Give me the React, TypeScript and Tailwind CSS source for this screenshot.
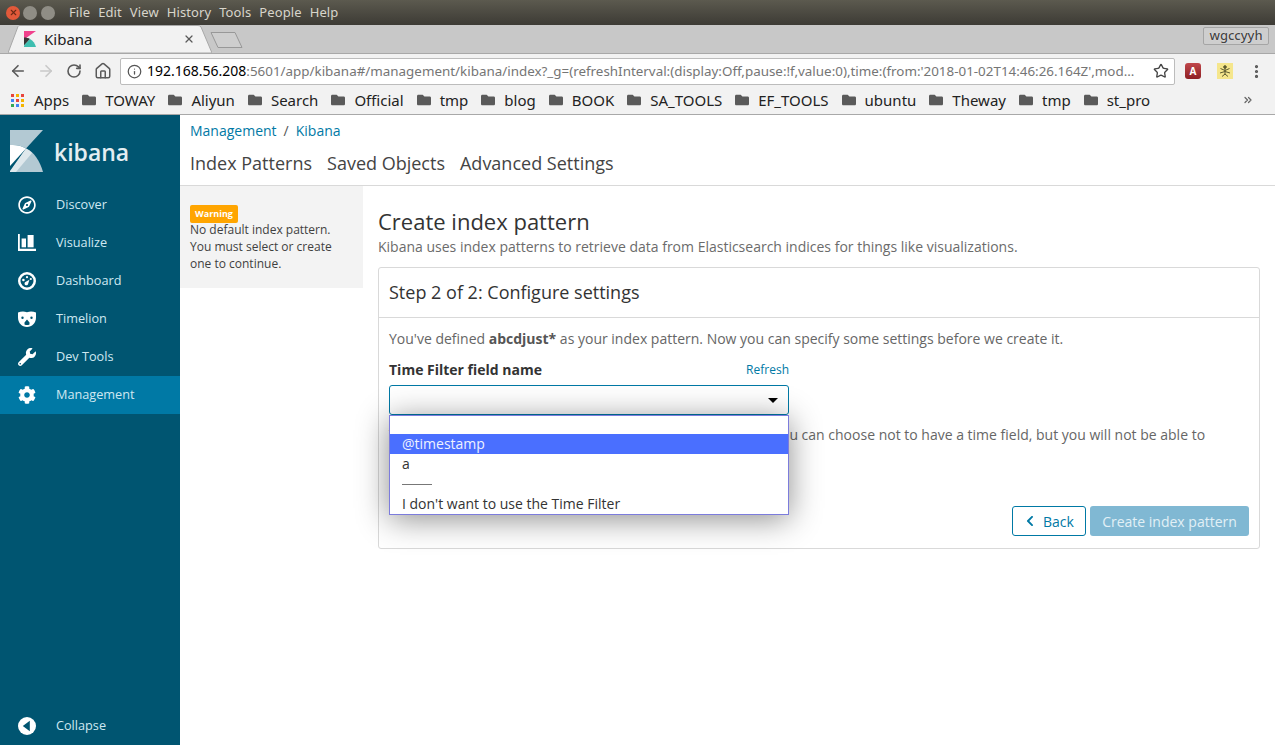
import { ArrowLeft, ArrowRight, EllipsisVertical, Home, Info, RotateCw, Star, X, ChevronsRight } from "lucide-react";
import { FaChevronLeft, FaCog, FaFolder, FaRegCompass, FaWrench } from "react-icons/fa";

const menus = ["File", "Edit", "View", "History", "Tools", "People", "Help"];
const bookmarks = ["TOWAY", "Aliyun", "Search", "Official", "tmp", "blog", "BOOK", "SA_TOOLS", "EF_TOOLS", "ubuntu", "Theway", "tmp", "st_pro"];
const appColors = ["#e8453c", "#f4b400", "#e8453c", "#4285f4", "#e8453c", "#f4b400", "#34a853", "#4285f4", "#f4b400"];

function VisualizeIcon() {
  return (
    <svg width="18" height="18" viewBox="0 0 18 18" fill="#fff">
      <path d="M0 0h1.800v14.800H18V17H0z" />
      <rect x="3.600" y="4.500" width="4.400" height="8.800" />
      <rect x="9.600" y="1" width="6" height="12.300" />
    </svg>
  );
}

function DashboardIcon() {
  return (
    <svg width="18" height="18" viewBox="0 0 18 18" fill="#fff">
      <path fillRule="evenodd" d="M9 0a9 9 0 1 1 0 18A9 9 0 0 1 9 0zm0 2.500a6.500 6.500 0 1 0 0 13 6.500 6.500 0 0 0 0-13z" />
      <circle cx="5.400" cy="8" r="1.300" />
      <circle cx="9" cy="5.200" r="1.100" />
      <circle cx="12.800" cy="7" r="1.100" />
      <path d="M7.400 10l4-2.200-1.400 4.400a1.800 1.800 0 1 1-2.600-2.200z" />
    </svg>
  );
}

function TimelionIcon() {
  return (
    <svg width="18" height="16" viewBox="0 0 18 16" fill="#fff">
      <path fillRule="evenodd" d="M0 1.500C3 .2 6 0 9 1.200 12 0 15 .2 18 1.500v5C18 12 14 16 9 16S0 12 0 6.500zM4.500 5.500a1.200 1.200 0 1 0 0 2.400 1.200 1.200 0 0 0 0-2.400zm9 0a1.200 1.200 0 1 0 0 2.400 1.200 1.200 0 0 0 0-2.400zM6.500 11.500L9 8.500l2.500 3v2a6 6 0 0 1-5 0z" />
    </svg>
  );
}

function CollapseIcon() {
  return (
    <svg width="18" height="18" viewBox="0 0 18 18">
      <circle cx="9" cy="9" r="9" fill="#fff" />
      <path d="M11.800 3.800v10.400L4.800 9z" fill="#005571" />
    </svg>
  );
}

function KibanaLogo() {
  return (
    <svg width="33" height="42" viewBox="0 0 33 42">
      <path d="M0 0h33L16 18.500C11 15.500 6 14.500 0 15z" fill="#b3c9d3" />
      <path d="M16 18.500C24 22 30 31 33 42H0z" fill="#b3c9d3" />
      <path d="M0 15c6-.5 11 .5 16 3.500L0 36z" fill="#fff" />
      <path d="M0 41L16 18.500c2.500 1 4.500 2.800 6 4.500L6 42H0z" fill="#dfe8ec" />
    </svg>
  );
}

function Favicon() {
  return (
    <svg width="12" height="16" viewBox="0 0 12 16">
      <path d="M0 0h12L0 8.500z" fill="#f0418c" />
      <path d="M0 6.500C2.500 6.500 4.500 7 6 8L0 14.500z" fill="#353535" />
      <path d="M0 16V14.500L6 8C9 9.500 11 12.500 12 16z" fill="#3ebeb0" />
    </svg>
  );
}

function BugBadge() {
  return (
    <svg width="16" height="16" viewBox="0 0 16 16">
      <rect width="16" height="16" fill="#f5e68c" />
      <g stroke="#5c5a30" strokeWidth="1" fill="#5c5a30">
        <circle cx="8" cy="4" r="1.300" />
        <path d="M8 5v7M3.500 5.500L8 7.500l4.500-2M3 10l5-1.500 5 1.500M5 13.500L8 11l3 2.500" fill="none" />
      </g>
    </svg>
  );
}

function NavItem({ label, icon, active }: { label: string; icon: React.ReactNode; active?: boolean }) {
  return (
    <div className={`flex h-[38px] items-center text-[12.700px] text-[#cfe8f1] ${active ? "bg-[#0079a5]" : ""}`}>
      <div className="flex w-[56px] justify-center pr-[2px] text-white">{icon}</div>
      <span>{label}</span>
    </div>
  );
}

export default function App() {
  return (
    <div className="flex h-[745px] w-[1275px] flex-col overflow-hidden bg-white font-['Open_Sans',sans-serif]">
      {/* window title bar */}
      <div className="flex h-[25px] items-center bg-gradient-to-b from-[#5c5a4f] to-[#3d3b35] pl-[6px] font-['Noto_Sans',sans-serif] text-[13px] text-[#d8d5cb]">
        <div className="flex h-[14px] w-[14px] items-center justify-center rounded-full bg-[#e2593a]">
          <X size={9} strokeWidth={3} color="#6b2a17" />
        </div>
        <div className="ml-[3px] h-[14px] w-[14px] rounded-full bg-[#8f8d85]" />
        <div className="ml-[4px] h-[14px] w-[14px] rounded-full bg-[#8f8d85]" />
        <div className="ml-[14px] flex gap-[8px] tracking-[0.1px]">
          {menus.map((m) => (
            <span key={m}>{m}</span>
          ))}
        </div>
      </div>

      {/* tab strip */}
      <div className="flex h-[28px] items-end bg-[#c8c8c8]">
        <div className="relative ml-[8px] flex h-[28px] w-[204px] items-center pl-[16px] text-[15px] text-[#222]">
          <svg className="absolute top-0 left-0" width="204" height="28" viewBox="0 0 204 28">
            <path d="M0 28L10 1.500Q10.500 .5 12 .5H190Q192 .5 193 2L204 28z" fill="#f2f2f2" stroke="#a8a8a8" />
          </svg>
          <div className="relative flex w-full items-center font-['Noto_Sans',sans-serif]">
            <Favicon />
            <span className="ml-[8px]">Kibana</span>
            <X size={12} strokeWidth={2.500} className="mr-[17px] ml-auto text-[#5a5a5a]" />
          </div>
        </div>
        <svg className="mb-[4px] -ml-[4px]" width="36" height="18" viewBox="0 0 36 18">
          <path d="M3 1.500H27L34 16.500H10z" fill="#cecece" stroke="#989898" strokeLinejoin="round" />
        </svg>
        <div className="mr-[6px] mb-[8px] ml-auto flex h-[18px] w-[66px] items-center justify-center rounded-[2px] border border-[#a5a5a5] bg-[#cecece] font-['Noto_Sans',sans-serif] text-[13px] font-medium text-[#444] [text-shadow:0_0_1px_#fff]">
          wgccyyh
        </div>
      </div>

      {/* toolbar */}
      <div className="flex h-[33px] items-center border-t border-[#a8a8a8] bg-[#f2f2f2] pt-[2px] text-[#5a5a5a]">
        <ArrowLeft size={18} strokeWidth={2.200} className="ml-[9px]" />
        <ArrowRight size={18} strokeWidth={2.200} className="ml-[10px] text-[#c9c9c9]" />
        <RotateCw size={16} strokeWidth={2.400} className="ml-[11px]" />
        <Home size={18} strokeWidth={2} className="ml-[12px]" />
        <div className="ml-[8px] flex h-[27px] w-[1055px] items-center rounded-[2px] border border-[#bcbcbc] bg-white pr-[5px] pl-[6px]">
          <Info size={15} strokeWidth={2} className="shrink-0 text-[#555]" />
          <span className="ml-[5px] min-w-0 flex-1 overflow-hidden font-['Noto_Sans',sans-serif] text-[13.400px] whitespace-nowrap text-[#757575]">
            <span className="text-[14px] text-black">192.168.56.208</span>
            :5601/app/kibana#/management/kibana/index?_g=(refreshInterval:(display:Off,pause:!f,value:0),time:(from:'2018-01-02T14:46:26.164Z',mod…
          </span>
          <Star size={16} strokeWidth={2} className="ml-[6px] shrink-0 text-[#444]" />
        </div>
        <div className="ml-[10px] flex h-[16px] w-[16px] items-center justify-center rounded-[3px] bg-gradient-to-b from-[#c0474b] to-[#8e1f24] text-[10px] font-bold text-white">
          A
        </div>
        <div className="ml-[16px]">
          <BugBadge />
        </div>
        <EllipsisVertical size={17} strokeWidth={2.500} className="ml-[15px] text-[#555]" />
      </div>

      {/* bookmarks */}
      <div className="flex h-[29px] items-center border-b border-[#a8a8a8] bg-[#f2f2f2] pl-[11px] font-['Noto_Sans',sans-serif] text-[15px] text-[#222]">
        <div className="grid h-[13px] w-[13px] grid-cols-3 gap-[2px]">
          {appColors.map((c, i) => (
            <span key={i} className="block h-[3px] w-[3px]" style={{ backgroundColor: c }} />
          ))}
        </div>
        <span className="ml-[10px]">Apps</span>
        <div className="ml-[13px] flex items-center gap-[13px]">
          {bookmarks.map((b, i) => (
            <div key={i} className="flex items-center gap-[9px]">
              <FaFolder size={14} className="text-[#5a5a5a]" />
              <span>{b}</span>
            </div>
          ))}
        </div>
        <ChevronsRight size={12} strokeWidth={2.500} className="mr-[21px] ml-auto text-[#666]" />
      </div>

      {/* kibana */}
      <div className="flex min-h-0 flex-1">
        <aside className="flex w-[180px] shrink-0 flex-col bg-[#005571]">
          <div className="flex h-[71px] items-center pt-[1px] pl-[10px]">
            <KibanaLogo />
            <span className="mt-[2px] ml-[11px] text-[23px] leading-none font-semibold text-[#e4eef2]">kibana</span>
          </div>
          <NavItem label="Discover" icon={<FaRegCompass size={18} />} />
          <NavItem label="Visualize" icon={<VisualizeIcon />} />
          <NavItem label="Dashboard" icon={<DashboardIcon />} />
          <NavItem label="Timelion" icon={<TimelionIcon />} />
          <NavItem label="Dev Tools" icon={<FaWrench size={18} />} />
          <NavItem label="Management" icon={<FaCog size={18} />} active />
          <div className="mt-auto">
            <NavItem label="Collapse" icon={<CollapseIcon />} />
          </div>
        </aside>

        <main className="min-w-0 flex-1">
          <div className="flex h-[71px] flex-col border-b border-[#d9d9d9] pl-[10px]">
            <div className="mt-[5px] flex h-[20px] items-center text-[14px] text-[#0079a5]">
              <span>Management</span>
              <span className="mx-[7px] text-[#555]">/</span>
              <span>Kibana</span>
            </div>
            <div className="mt-[11px] flex gap-[15px] text-[18px] leading-[24px] text-[#444]">
              <span>Index Patterns</span>
              <span>Saved Objects</span>
              <span>Advanced Settings</span>
            </div>
          </div>

          <div className="flex">
            <div className="h-[102px] w-[183px] shrink-0 bg-[#f3f3f3] px-[10px] pt-[19px] text-[12px] leading-[17px] text-[#3f3f3f]">
              <div className="h-[18px] w-[48px] rounded-[2px] bg-[#ffa500] text-center text-[9px] leading-[18px] font-bold text-white">
                Warning
              </div>
              <p className="-mt-[2px]">
                No default index pattern.
                <br />
                You must select or create
                <br />
                one to continue.
              </p>
            </div>

            <div className="min-w-0 flex-1 pt-[22px] pr-[15px] pl-[15px]">
              <h1 className="text-[22px] leading-[26px] text-[#333]">Create index pattern</h1>
              <p className="mt-[3px] text-[14px] leading-[20px] text-[#6b6b6b]">
                Kibana uses index patterns to retrieve data from Elasticsearch indices for things like visualizations.
              </p>
              <div className="mt-[10px] h-[282px] rounded-[3px] border border-[#d9d9d9]">
                <div className="flex h-[50px] items-center border-b border-[#d9d9d9] pl-[10px] text-[18px] text-[#333]">
                  Step 2 of 2: Configure settings
                </div>
                <div className="px-[10px] pt-[11px]">
                  <p className="text-[14px] leading-[20px] text-[#666]">
                    You've defined <b className="font-bold text-[#555]">abcdjust*</b> as your index pattern. Now you can specify some settings before we create it.
                  </p>
                  <div className="relative mt-[10px] w-[400px]">
                    <div className="flex h-[20px] items-center justify-between">
                      <span className="text-[14px] font-bold text-[#333]">Time Filter field name</span>
                      <span className="mt-[1px] text-[12px] text-[#0079a5]">Refresh</span>
                    </div>
                    <div className="mt-[6px] flex h-[30px] items-center justify-end rounded-[3px] border border-[#0079a5] bg-white pr-[10px]">
                      <span className="mt-[1px] h-0 w-0 border-x-[5px] border-t-[5px] border-x-transparent border-t-black" />
                    </div>
                    <div className="absolute top-[56px] left-0 z-10 h-[100px] w-[400px] border border-[#7c7cdc] bg-white pt-[18px] text-[14px] text-[#333] shadow-[0_4px_30px_rgba(0,0,0,0.45)]">
                      <div className="flex h-[20px] items-center bg-[#4a6fff] pb-[2px] pl-[12px] text-[#eef2ff]">@timestamp</div>
                      <div className="flex h-[20px] items-center pb-[2px] pl-[12px]">a</div>
                      <div className="flex h-[20px] items-center pl-[12px]">
                        <span className="block h-px w-[30px] bg-[#777]" />
                      </div>
                      <div className="flex h-[20px] items-center pb-[2px] pl-[12px]">I don't want to use the Time Filter</div>
                    </div>
                  </div>
                  <p className="mt-[10px] text-[14px] leading-[20px] text-[#666]">
                    The Time Filter will use this field to filter your data by time. You can choose not to have a time field, but you will not be able to narrow down your data by a time range.
                  </p>
                  <div className="mt-[41px] flex justify-end gap-[4px]">
                    <button className="flex h-[30px] w-[74px] items-center justify-center gap-[7px] rounded-[3px] border border-[#0079a5] bg-white text-[14px] text-[#0079a5]">
                      <FaChevronLeft size={12} />
                      Back
                    </button>
                    <button className="h-[30px] w-[159px] rounded-[3px] bg-[#80b8d3] text-[14px] text-[#e2f0f6]">
                      Create index pattern
                    </button>
                  </div>
                </div>
              </div>
            </div>
          </div>
        </main>
      </div>
    </div>
  );
}
